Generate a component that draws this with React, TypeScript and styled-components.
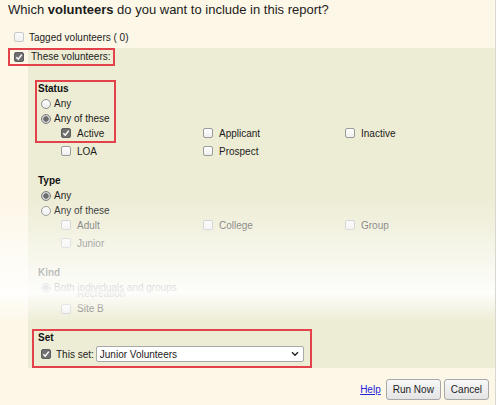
import React from "react";
import styled, { createGlobalStyle } from "styled-components";

const GlobalStyle = createGlobalStyle`
  html, body {
    margin: 0;
    background: #ffffff;
  }
  body {
    font-family: "Liberation Sans", Arial, sans-serif;
    color: #1c1c1c;
  }
`;

const Page = styled.div`
  position: relative;
  width: 495px;
  height: 405px;
  background: #fdf7e7;
  border-right: 1px solid #d9d7d0;
  overflow: hidden;
`;

const Title = styled.div`
  padding-left: 8px;
  font-size: 13px;
  line-height: 20px;
  height: 20px;
`;

const TaggedRow = styled.label`
  display: flex;
  align-items: center;
  gap: 5px;
  height: 16px;
  margin-top: 9px;
  padding-left: 14px;
  font-size: 10px;
`;

const Section = styled.div`
  position: relative;
  display: grid;
  grid-template-columns: 28px 1fr;
  margin-top: 3px;
`;

const Gutter = styled.div`
  display: flex;
  align-items: center;
  height: 18px;
  padding-left: 14px;
`;

const Panel = styled.div`
  position: relative;
  background: #edecd4;
  font-size: 10px;
`;

const PanelLabel = styled.div`
  height: 18px;
  line-height: 18px;
  padding-left: 3px;
`;

const Group = styled.div<{ $first?: boolean }>`
  margin-top: ${(p) => (p.$first ? "16px" : "14px")};
  padding-left: 10px;
`;

const GroupHeading = styled.div`
  font-weight: bold;
  line-height: 14px;
  height: 14px;
  color: #111;
`;

const RadioRow = styled.label`
  display: flex;
  align-items: center;
  gap: 3px;
  height: 15px;
  padding-left: 3px;
`;

const Radio = styled.span<{ $checked?: boolean }>`
  box-sizing: border-box;
  width: 10px;
  height: 10px;
  border-radius: 50%;
  border: 1px solid ${(p) => (p.$checked ? "#7d7d7d" : "#8f8f8f")};
  background: ${(p) =>
    p.$checked
      ? "radial-gradient(circle, #6c6c6c 0 2.4px, #d2d2d2 3px)"
      : "linear-gradient(#ffffff, #ececec)"};
`;

const OptionGrid = styled.div<{ $rowHeight: number; $offset: number }>`
  display: grid;
  grid-template-columns: repeat(3, 142px);
  grid-auto-rows: ${(p) => p.$rowHeight}px;
  margin-top: ${(p) => p.$offset}px;
  padding-left: 23px;
`;

const Option = styled.label<{ $muted?: boolean }>`
  display: flex;
  align-items: center;
  gap: 6px;
  color: ${(p) => (p.$muted ? "#5f5f5f" : "#1c1c1c")};
`;

const Box = styled.span<{ $checked?: boolean; $disabled?: boolean; $hidden?: boolean }>`
  box-sizing: border-box;
  display: inline-flex;
  align-items: center;
  justify-content: center;
  flex: none;
  width: 10px;
  height: 10px;
  border-radius: 2px;
  visibility: ${(p) => (p.$hidden ? "hidden" : "visible")};
  border: 1px solid
    ${(p) => (p.$checked ? "#5e5e5e" : p.$disabled ? "#c9c9c9" : "#9b9b9b")};
  background: ${(p) =>
    p.$checked
      ? "#707070"
      : p.$disabled
      ? "linear-gradient(#fafafa, #f0f0f0)"
      : "linear-gradient(#ffffff, #eeeeee)"};
`;

const SetBox = styled.div`
  box-sizing: border-box;
  width: 280px;
  margin: 13px 0 0 4px;
  padding: 0 0 4px 4px;
  border: 2px solid #e4424a;
`;

const SetRow = styled.div`
  display: flex;
  align-items: center;
  height: 16px;
  margin-top: 1px;
  padding-left: 3px;
`;

const SetLabel = styled.span`
  margin: 0 2px 0 5px;
`;

const SelectWrap = styled.div`
  position: relative;
  width: 208px;
  height: 16px;
`;

const Select = styled.select`
  appearance: none;
  box-sizing: border-box;
  width: 100%;
  height: 100%;
  padding: 0 16px 0 3px;
  border: 1px solid #a9a9a9;
  border-radius: 2px;
  background: #ffffff;
  font-family: "Liberation Sans", Arial, sans-serif;
  font-size: 10px;
  color: #1c1c1c;
`;

const Chevron = styled.svg`
  position: absolute;
  right: 5px;
  top: 5px;
  pointer-events: none;
`;

const Footer = styled.div`
  display: flex;
  justify-content: flex-end;
  align-items: center;
  gap: 3px;
  margin-top: 11px;
  padding-right: 6px;
`;

const HelpLink = styled.a`
  margin-right: 2px;
  font-size: 10px;
  color: #2424d8;
  text-decoration: underline;
`;

const Button = styled.button`
  height: 21px;
  padding: 0 6px;
  border: 1px solid #a8a8a8;
  border-radius: 3px;
  background: linear-gradient(#f8f8f8, #e4e4e4);
  font-family: "Liberation Sans", Arial, sans-serif;
  font-size: 10px;
  color: #1c1c1c;
`;

const Fade = styled.div`
  position: absolute;
  left: 0;
  right: 0;
  top: 196px;
  height: 127px;
  pointer-events: none;
  background: linear-gradient(
    rgba(255, 255, 255, 0) 0%,
    rgba(255, 255, 255, 0.9) 76%,
    rgba(255, 255, 255, 0) 100%
  );
`;

const Callout = styled.div<{ $top: number; $left: number; $w: number; $h: number }>`
  position: absolute;
  box-sizing: border-box;
  top: ${(p) => p.$top}px;
  left: ${(p) => p.$left}px;
  width: ${(p) => p.$w}px;
  height: ${(p) => p.$h}px;
  border: 2px solid #e4424a;
  pointer-events: none;
`;

function Check({ checked, disabled, hidden }: { checked?: boolean; disabled?: boolean; hidden?: boolean }) {
  return (
    <Box $checked={checked} $disabled={disabled} $hidden={hidden}>
      {checked && (
        <svg width="8" height="8" viewBox="0 0 8 8">
          <path d="M1.3 4.3 L3.2 6.1 L6.8 1.6" fill="none" stroke="#fff" strokeWidth="1.5" />
        </svg>
      )}
    </Box>
  );
}

type Opt = { label: string; checked?: boolean };

function Options({ items, rowHeight, offset, muted }: { items: Opt[]; rowHeight: number; offset: number; muted?: boolean }) {
  return (
    <OptionGrid $rowHeight={rowHeight} $offset={offset}>
      {items.map((o) => (
        <Option key={o.label} $muted={muted}>
          <Check checked={o.checked} disabled={muted} />
          {o.label}
        </Option>
      ))}
    </OptionGrid>
  );
}

export default function App() {
  return (
    <>
      <GlobalStyle />
      <Page>
        <Title>
          Which <b>volunteers</b> do you want to include in this report?
        </Title>
        <TaggedRow>
          <Check disabled />
          Tagged volunteers ( 0)
        </TaggedRow>
        <Section>
          <Gutter>
            <Check checked />
          </Gutter>
          <Panel>
            <PanelLabel>These volunteers:</PanelLabel>

            <Group $first>
              <GroupHeading>Status</GroupHeading>
              <RadioRow>
                <Radio />
                Any
              </RadioRow>
              <RadioRow>
                <Radio $checked />
                Any of these
              </RadioRow>
              <Options
                rowHeight={18}
                offset={-2}
                items={[
                  { label: "Active", checked: true },
                  { label: "Applicant" },
                  { label: "Inactive" },
                  { label: "LOA" },
                  { label: "Prospect" },
                ]}
              />
            </Group>

            <Group>
              <GroupHeading>Type</GroupHeading>
              <RadioRow>
                <Radio $checked />
                Any
              </RadioRow>
              <RadioRow>
                <Radio />
                Any of these
              </RadioRow>
              <Options
                rowHeight={18}
                offset={-2}
                muted
                items={[{ label: "Adult" }, { label: "College" }, { label: "Group" }, { label: "Junior" }]}
              />
            </Group>

            <Group>
              <GroupHeading>Kind</GroupHeading>
              <RadioRow>
                <Radio $checked />
                Both individuals and groups
              </RadioRow>
              <OptionGrid $rowHeight={15} $offset={-9}>
                <Option $muted>
                  <Check hidden />
                  Recreation
                </Option>
                <span />
                <span />
                <Option $muted>
                  <Check disabled />
                  Site B
                </Option>
              </OptionGrid>
            </Group>

            <SetBox>
              <GroupHeading>Set</GroupHeading>
              <SetRow>
                <Check checked />
                <SetLabel>This set:</SetLabel>
                <SelectWrap>
                  <Select defaultValue="junior">
                    <option value="junior">Junior Volunteers</option>
                  </Select>
                  <Chevron width="8" height="6" viewBox="0 0 8 6">
                    <path d="M1 1.2 L4 4.2 L7 1.2" fill="none" stroke="#222" strokeWidth="1.4" />
                  </Chevron>
                </SelectWrap>
              </SetRow>
            </SetBox>

            <Callout $top={32} $left={7} $w={81} $h={63} />
          </Panel>
          <Callout $top={0} $left={8} $w={107} $h={18} />
        </Section>
        <Footer>
          <HelpLink href="#">Help</HelpLink>
          <Button>Run Now</Button>
          <Button>Cancel</Button>
        </Footer>
        <Fade />
      </Page>
    </>
  );
}
